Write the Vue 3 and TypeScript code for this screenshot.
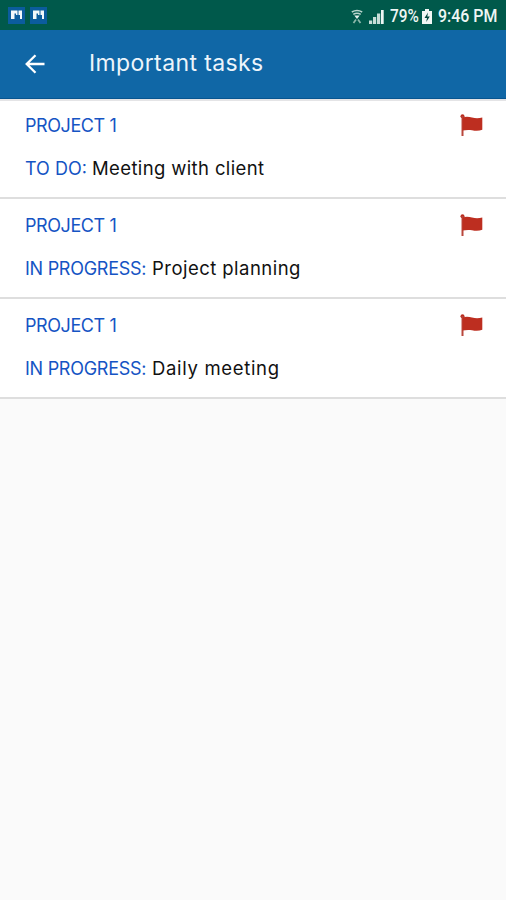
<script setup lang="ts">
interface Task {
  project: string
  status: string
  kind: string
  title: string
  slug: string
}

const tasks: Task[] = [
  { project: 'PROJECT 1', status: 'TO DO:', kind: 'todo', title: 'Meeting with client', slug: 'client' },
  { project: 'PROJECT 1', status: 'IN PROGRESS:', kind: 'progress', title: 'Project planning', slug: 'planning' },
  { project: 'PROJECT 1', status: 'IN PROGRESS:', kind: 'progress', title: 'Daily meeting', slug: 'daily' },
]
</script>

<template>
  <div class="screen">
    <div class="statusbar">
      <div class="notifications">
        <svg v-for="n in 2" :key="n" class="app-icon" viewBox="0 0 17 17">
          <rect width="17" height="17" fill="#0b5c9d" />
          <path d="M3 3.500h6.500V8H8V6.500H6.500V12H3zM10.500 3.500h3.500v8.500h-2V8h-1.500z" fill="#f2f7fa" />
        </svg>
      </div>
      <div class="system">
        <svg class="wifi" viewBox="0 0 12 15">
          <path d="M.8 3Q6 0 11.200 3M2.300 5.400Q6 3 9.700 5.400" fill="none" stroke="#b9d5cd" stroke-width="1.500" />
          <path d="M3.300 6.500h5.400L6 10z" fill="#e6f1ee" />
          <path d="M2.500 14l2.500-3.500M9.500 14L7 10.500" stroke="#8db8ab" stroke-width="1.700" />
        </svg>
        <svg class="signal" viewBox="0 0 15 15">
          <path d="M0 11.500h3.200V15H0zM4 8h3.200v7H4zM8 4.500h3.200V15H8z" fill="#c6ddd7" />
          <path d="M12 1h2.700v14H12z" fill="#edf5f3" />
        </svg>
        <span class="percent">79%</span>
        <svg class="battery" viewBox="0 0 10 15">
          <path d="M3 0h4v2h3v13H0V2h3z" fill="#f1f7f5" />
          <path d="M6 3.500L2.500 9H5l-.8 4L7.800 7.500H5.300z" fill="#00473d" />
        </svg>
        <span class="clock">9:46 PM</span>
      </div>
    </div>
    <header class="appbar">
      <svg class="back" viewBox="0 0 20 20">
        <path d="M19.500 10H2M10.500 1.200L1.700 10l8.800 8.800" fill="none" stroke="#fff" stroke-width="2.300" />
      </svg>
      <h1>Important tasks</h1>
    </header>
    <main class="list">
      <article v-for="task in tasks" :key="task.slug" class="task">
        <div class="top">
          <span class="project">{{ task.project }}</span>
          <svg class="flag" viewBox="0 0 24 24">
            <circle cx="2.500" cy="2.200" r="2" fill="#b92d20" />
            <path d="M1.500 2h2v20h-2z" fill="#b9473c" />
            <path d="M2.500 3.400C6 2.500 9 2.700 12 3.600c3.500 1 7 .9 10.300 0v12.200c-3 1.200-6.500 1.300-10.300.5-3-.6-6-.5-9.500.3z" fill="#bd2e20" />
          </svg>
        </div>
        <div class="detail">
          <span class="status" :class="task.kind">{{ task.status }}</span>
          <span class="title" :class="task.slug">{{ task.title }}</span>
        </div>
      </article>
    </main>
  </div>
</template>

<style>
body {
  margin: 0;
  background: #fafafa;
}
</style>

<style scoped>
.screen {
  width: 100%;
  height: 900px;
  overflow: hidden;
  background: #fafafa;
  font-family: Inter, "Open Sans", sans-serif;
  white-space: nowrap;
}
.statusbar {
  height: 30px;
  box-sizing: border-box;
  padding: 0 9px 0 8px;
  display: flex;
  align-items: center;
  justify-content: space-between;
  background: #00594b;
  color: #eef6f4;
  font-family: Roboto, sans-serif;
  font-size: 17.500px;
  font-weight: 500;
}
.notifications {
  display: flex;
  gap: 5px;
}
.app-icon {
  width: 17px;
  height: 17px;
}
.system {
  display: flex;
  align-items: center;
  padding-top: 2px;
}
.wifi {
  width: 12px;
  height: 15px;
}
.signal {
  width: 15px;
  height: 15px;
  margin-left: 6px;
}
.percent {
  width: 29px;
  margin-left: 6px;
  transform: scaleX(0.88);
  transform-origin: left;
}
.battery {
  width: 10px;
  height: 15px;
  margin-left: 3px;
  margin-right: 1px;
}
.clock {
  width: 59px;
  margin-left: 5px;
  transform: scaleX(0.91);
  transform-origin: left;
}
.appbar {
  height: 69px;
  box-sizing: border-box;
  display: flex;
  align-items: center;
  padding-left: 25px;
  background: #1067a6;
  border-bottom: 1px solid #075590;
}
.back {
  width: 20px;
  height: 20px;
}
h1 {
  margin: 0 0 3px 44px;
  color: #edf5fb;
  font-size: 23px;
  line-height: 30px;
  font-weight: 400;
  letter-spacing: 0.38px;
}
.task {
  height: 100px;
  box-sizing: border-box;
  padding: 13px 22px 0 25px;
  background: #fff;
  border-bottom: 2px solid #dedede;
  font-size: 18px;
  line-height: 28px;
}
.task:first-child {
  border-top: 2px solid #e4e4e6;
  padding-top: 11px;
}
.top {
  display: flex;
  justify-content: space-between;
  height: 43px;
}
.flag {
  width: 24px;
  height: 24px;
  margin-top: 2px;
}
.detail {
  display: flex;
}
.project,
.status {
  color: #1554c4;
}
.project {
  letter-spacing: -0.42px;
}
.status.todo {
  width: 67px;
}
.status.progress {
  width: 127px;
  letter-spacing: -0.27px;
}
.title {
  color: #111;
  font-size: 18.500px;
  line-height: 26px;
}
.title.client {
  letter-spacing: 0.37px;
}
.title.planning {
  letter-spacing: 0.46px;
}
.title.daily {
  letter-spacing: 0.67px;
}
</style>
